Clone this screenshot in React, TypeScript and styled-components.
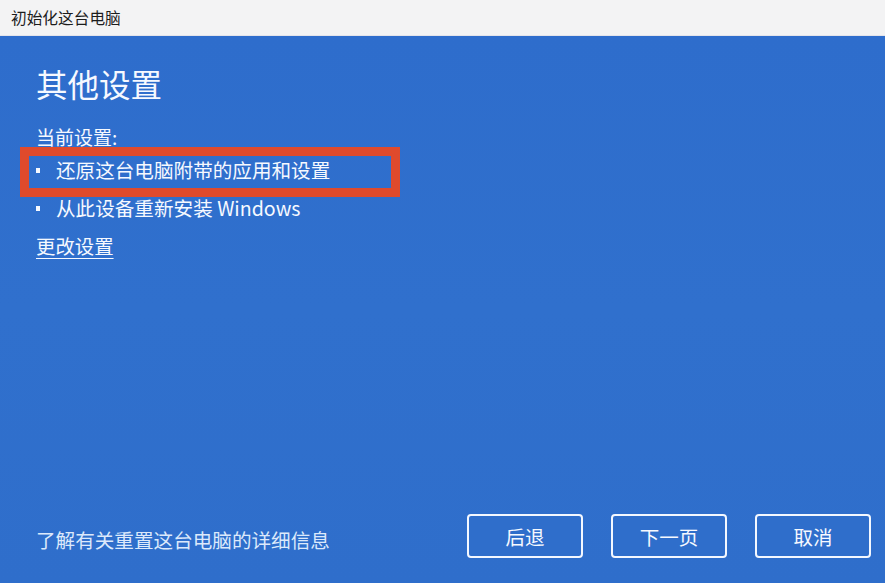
import React from 'react';
import styled, { createGlobalStyle } from 'styled-components';

const GlobalStyle = createGlobalStyle`
  html, body {
    margin: 0;
    padding: 0;
    background: #2f6fcc;
  }
  body {
    font-family: "Noto Sans CJK SC", "Noto Sans", "Liberation Sans", sans-serif;
  }
`;

const Window = styled.div`
  width: 885px;
  height: 583px;
  display: flex;
  flex-direction: column;
  overflow: hidden;
`;

const TitleBar = styled.div`
  height: 36px;
  flex-shrink: 0;
  display: flex;
  align-items: center;
  padding-left: 11px;
  background: #f3f3f4;
  color: #1c1c1c;
  font-size: 15.7px;
  border-bottom: 1px solid #e4e4ea;
  box-sizing: border-box;
`;

const Body = styled.div`
  flex: 1;
  display: flex;
  flex-direction: column;
  background: linear-gradient(180deg, #2e6dcc 0%, #3070cd 50%, #2f6ecb 100%);
  color: #f6f9ff;
`;

const Content = styled.div`
  flex: 1;
  display: flex;
  flex-direction: column;
  align-items: flex-start;
  padding: 27px 14px 0 36px;
`;

const Heading = styled.h1`
  margin: 0;
  font-size: 31.5px;
  font-weight: 400;
  line-height: 40px;
`;

const Label = styled.div`
  margin-top: 20px;
  font-size: 19px;
  line-height: 28px;
`;

const List = styled.ul`
  list-style: none;
  margin: 0;
  padding: 0;
`;

const Item = styled.li`
  position: relative;
  display: flex;
  align-items: center;
  font-size: 19.6px;
  line-height: 38px;
  white-space: nowrap;
`;

const Bullet = styled.span`
  width: 4px;
  height: 5px;
  background: #f6f9ff;
  margin-right: 16px;
`;

const Highlight = styled.span`
  position: absolute;
  left: -16px;
  top: -4px;
  width: 380px;
  height: 50px;
  box-sizing: border-box;
  border: 9px solid #df4a2c;
  pointer-events: none;
`;

const ChangeLink = styled.a`
  font-size: 19.4px;
  line-height: 38px;
  color: #f6f9ff;
  text-decoration: underline;
  text-underline-offset: 4px;
  cursor: pointer;
`;

const Footer = styled.div`
  display: flex;
  align-items: center;
  padding: 0 14px 25px 36px;
`;

const InfoText = styled.span`
  flex: 1;
  font-size: 19.6px;
  color: #dce9fb;
  margin-top: 6px;
`;

const Buttons = styled.div`
  display: flex;
  gap: 28px;
`;

const Button = styled.button`
  width: 116px;
  height: 44px;
  border: 2px solid #f4f8ff;
  border-radius: 4px;
  background: #2f6ecb;
  color: #f6f9ff;
  font-family: inherit;
  font-size: 19.5px;
  cursor: pointer;
  padding: 0;
`;

const App: React.FC = () => {
  return (
    <>
      <GlobalStyle />
      <Window>
        <TitleBar>初始化这台电脑</TitleBar>
        <Body>
          <Content>
            <Heading>其他设置</Heading>
            <Label>当前设置:</Label>
            <List>
              <Item>
                <Bullet />
                还原这台电脑附带的应用和设置
                <Highlight />
              </Item>
              <Item>
                <Bullet />
                从此设备重新安装 Windows
              </Item>
            </List>
            <ChangeLink>更改设置</ChangeLink>
          </Content>
          <Footer>
            <InfoText>了解有关重置这台电脑的详细信息</InfoText>
            <Buttons>
              <Button>后退</Button>
              <Button>下一页</Button>
              <Button>取消</Button>
            </Buttons>
          </Footer>
        </Body>
      </Window>
    </>
  );
};

export default App;
